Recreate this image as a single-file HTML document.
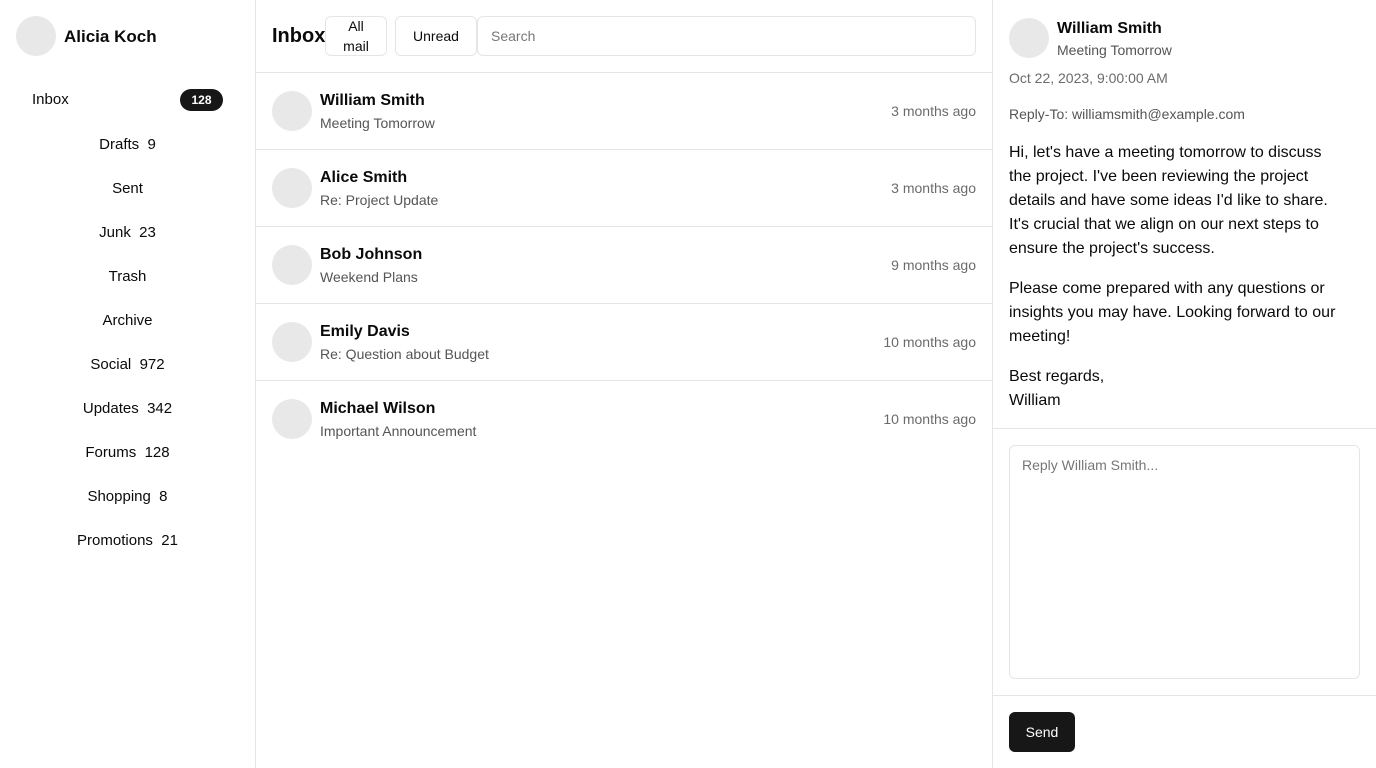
<!DOCTYPE html>
<html><head><style>
*{box-sizing:border-box;margin:0;padding:0}
body{width:1376px;height:768px;font-family:"Liberation Sans",sans-serif;color:#0a0a0a;background:#fff;position:relative;overflow:hidden}
.av{position:absolute;width:40px;height:40px;border-radius:50%;background:#e8e8e8}
.abs{position:absolute;white-space:nowrap}
.nav{position:absolute;left:0;width:255px;text-align:center;font-size:15px;line-height:20px}
.g{color:#6b6b6b}
.row{position:absolute;left:256px;width:736px;height:77px;border-bottom:1px solid #e5e5e5}
.row .av{left:16px;top:18px}
.row .n{position:absolute;left:64px;top:19px;font-weight:bold;font-size:16px}
.row .s{position:absolute;left:64px;top:42px;font-size:14px;color:#555}
.row .t{position:absolute;right:16px;top:30px;font-size:14px;color:#6b6b6b}
.btn{position:absolute;top:16px;height:40px;border:1px solid #e5e5e5;border-radius:6px;font-size:14px;text-align:center;display:flex;align-items:center;justify-content:center;line-height:20px}
</style></head><body>
<div style="position:absolute;left:255px;top:0;width:1px;height:768px;background:#e5e5e5"></div>
<div style="position:absolute;left:992px;top:0;width:1px;height:768px;background:#e5e5e5"></div>

<div class="av" style="left:16px;top:16px"></div>
<div class="abs" style="left:64px;top:27px;font-weight:bold;font-size:17px">Alicia Koch</div>
<div class="abs" style="left:32px;top:91px;font-size:15px">Inbox</div>
<div class="abs" style="left:180px;top:89px;width:43px;height:22px;border-radius:11px;background:#171717;color:#fff;font-size:12px;font-weight:bold;text-align:center;line-height:22px">128</div>
<div class="nav" style="top:135px">Drafts&nbsp;&nbsp;9</div>
<div class="nav" style="top:179px">Sent</div>
<div class="nav" style="top:223px">Junk&nbsp;&nbsp;23</div>
<div class="nav" style="top:267px">Trash</div>
<div class="nav" style="top:311px">Archive</div>
<div class="nav" style="top:355px">Social&nbsp;&nbsp;972</div>
<div class="nav" style="top:399px">Updates&nbsp;&nbsp;342</div>
<div class="nav" style="top:443px">Forums&nbsp;&nbsp;128</div>
<div class="nav" style="top:487px">Shopping&nbsp;&nbsp;8</div>
<div class="nav" style="top:531px">Promotions&nbsp;&nbsp;21</div>

<div class="abs" style="left:272px;top:25px;font-weight:bold;font-size:20px">Inbox</div>
<div class="btn" style="left:325px;width:62px">All<br>mail</div>
<div class="btn" style="left:395px;width:82px">Unread</div>
<div class="btn" style="left:477px;width:499px;justify-content:flex-start;padding-left:13px;color:#777">Search</div>
<div style="position:absolute;left:256px;top:72px;width:736px;height:1px;background:#e5e5e5"></div>

<div class="row" style="top:73px"><div class="av"></div><div class="n">William Smith</div><div class="s">Meeting Tomorrow</div><div class="t">3 months ago</div></div>
<div class="row" style="top:150px"><div class="av"></div><div class="n">Alice Smith</div><div class="s">Re: Project Update</div><div class="t">3 months ago</div></div>
<div class="row" style="top:227px"><div class="av"></div><div class="n">Bob Johnson</div><div class="s">Weekend Plans</div><div class="t">9 months ago</div></div>
<div class="row" style="top:304px"><div class="av"></div><div class="n">Emily Davis</div><div class="s">Re: Question about Budget</div><div class="t">10 months ago</div></div>
<div class="row" style="top:381px;border-bottom:none"><div class="av"></div><div class="n">Michael Wilson</div><div class="s">Important Announcement</div><div class="t">10 months ago</div></div>

<div class="av" style="left:1009px;top:18px"></div>
<div class="abs" style="left:1057px;top:20px;font-weight:bold;font-size:16px">William Smith</div>
<div class="abs" style="left:1057px;top:42px;font-size:14px;color:#555">Meeting Tomorrow</div>
<div class="abs g" style="left:1009px;top:70px;font-size:14px">Oct 22, 2023, 9:00:00 AM</div>
<div class="abs" style="left:1009px;top:106px;font-size:14px;color:#555">Reply-To: williamsmith@example.com</div>
<div style="position:absolute;left:1009px;top:141px;width:336px;font-size:16px;line-height:24px">
<p style="margin-bottom:16px">Hi, let's have a meeting tomorrow to discuss the project. I've been reviewing the project details and have some ideas I'd like to share. It's crucial that we align on our next steps to ensure the project's success.</p>
<p style="margin-bottom:16px">Please come prepared with any questions or insights you may have. Looking forward to our meeting!</p>
<p>Best regards,<br>William</p></div>
<div style="position:absolute;left:993px;top:428px;width:383px;height:1px;background:#e5e5e5"></div>
<div style="position:absolute;left:1009px;top:445px;width:351px;height:234px;border:1px solid #e5e5e5;border-radius:6px;padding:11px 12px;font-size:14px;color:#777">Reply William Smith...</div>
<div style="position:absolute;left:993px;top:695px;width:383px;height:1px;background:#e5e5e5"></div>
<div style="position:absolute;left:1009px;top:712px;width:66px;height:40px;border-radius:6px;background:#171717;color:#fff;font-size:14px;text-align:center;line-height:40px">Send</div>
</body></html>
